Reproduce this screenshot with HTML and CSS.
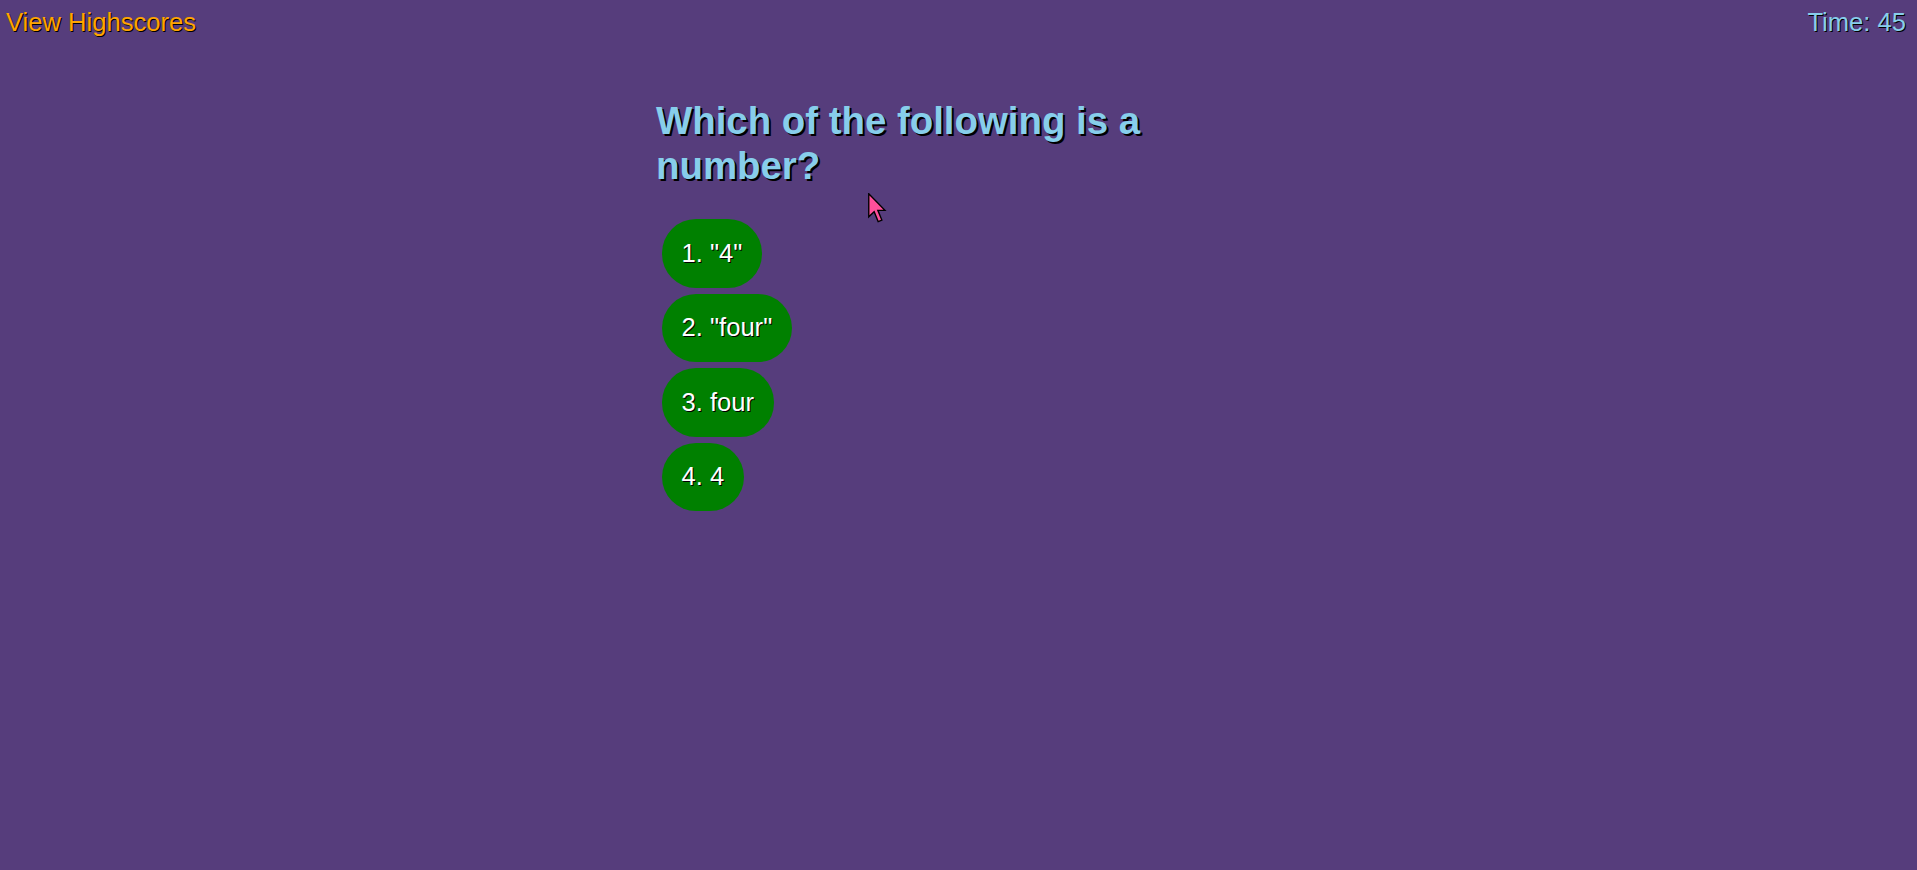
FILE: index.html
```html
<!DOCTYPE html>
<html lang="en">
<head>
<meta charset="utf-8">
<title>Quiz</title>
<link rel="stylesheet" href="styles.css">
</head>
<body>
<header class="topbar">
  <a class="highscores" href="#">View Highscores</a>
  <div class="timer">Time: 45</div>
</header>
<main class="quiz">
  <h1 class="question">Which of the following is a number?</h1>
  <div class="choices">
    <button class="choice">1. "4"</button>
    <button class="choice">2. "four"</button>
    <button class="choice">3. four</button>
    <button class="choice">4. 4</button>
  </div>
</main>
<svg class="cursor" width="20" height="30" viewBox="0 0 13 19.5" xmlns="http://www.w3.org/2000/svg">
  <path d="M0.5 0.5 L0.5 15.5 L4 12.2 L6.6 18.6 L9 17.6 L6.4 11.3 L11 11.3 Z" fill="#ff4f9b" stroke="#000" stroke-width="0.9" stroke-linejoin="miter"/>
</svg>
</body>
</html>
```

FILE: styles.css
```css
html, body {
  margin: 0;
  padding: 0;
}

body {
  background: #563d7c;
  font-family: "Liberation Sans", Arial, sans-serif;
  min-height: 870px;
  position: relative;
}

.topbar {
  display: flex;
  justify-content: space-between;
  align-items: flex-start;
  padding: 8px 11px 0 6px;
  font-size: 25.6px;
  line-height: 29px;
}

.highscores {
  color: #ffa500;
  text-decoration: none;
  text-shadow: 1px 1px 0 #000;
}

.timer {
  color: #87ceeb;
  text-shadow: 1px 1px 0 #000;
}

.quiz {
  width: 605px;
  margin: 0 auto;
  padding-top: 62px;
}

.question {
  margin: 0;
  font-size: 38.4px;
  line-height: 44.5px;
  font-weight: bold;
  color: #87ceeb;
  text-shadow: 2px 2px 0 #000;
}

.choices {
  display: flex;
  flex-direction: column;
  align-items: flex-start;
  gap: 6px;
  margin-top: 31px;
  margin-left: 6px;
}

.choice {
  background: #008000;
  color: #fff;
  border: none;
  border-radius: 34px;
  padding: 19.5px;
  font-family: "Liberation Sans", Arial, sans-serif;
  font-size: 25.6px;
  line-height: 29.5px;
  text-shadow: 1px 1px 0 #000;
  cursor: pointer;
}

.cursor {
  position: absolute;
  left: 868px;
  top: 193px;
}
```
